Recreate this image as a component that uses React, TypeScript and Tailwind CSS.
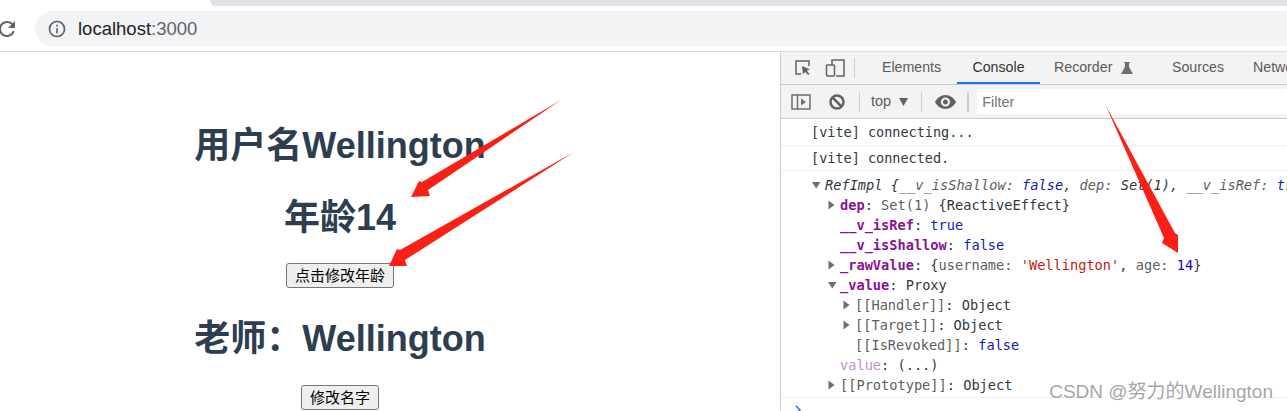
const ROW = "h-5 leading-5 whitespace-pre";

function Caret({ open }: { open?: boolean }) {
  return (
    <svg width="9" height="10" viewBox="0 0 9 10" className="shrink-0 fill-[#6e6e6e]">
      {open ? <path d="M0 2h8.500L4.250 8.500z" /> : <path d="M0.500 0.500v9l6-4.500z" />}
    </svg>
  );
}

function TreeRow({
  indent,
  caret,
  open,
  children,
}: {
  indent: string;
  caret?: boolean;
  open?: boolean;
  children: React.ReactNode;
}) {
  return (
    <div className={`flex items-center ${ROW} ${indent}`}>
      <span className="w-[12px] shrink-0">{caret && <Caret open={open} />}</span>
      <span>{children}</span>
    </div>
  );
}

function Arrows() {
  return (
    <svg width="1287" height="411" viewBox="0 0 1287 411" className="pointer-events-none absolute left-0 top-0 fill-[#fa2015]">
      <path d="M561 100 422 182 419 181 411 197 430 196 428 190z" />
      <path d="M574 152 400 250 397 249 389 266 407 266 405 260z" />
      <path d="M1106 106 1164 238 1162 243 1178 253 1178 235 1175 233z" />
    </svg>
  );
}

function Toolbar() {
  return (
    <div className="flex h-[52px] flex-col bg-white">
      <div className="h-[11px] shrink-0">
        <div className="ml-[210px] h-[6px] rounded-bl-[6px] bg-[#dee1e6]" />
      </div>
      <div className="flex h-[35px] shrink-0 items-center">
        <svg width="24" height="24" viewBox="0 0 24 24" className="-ml-[5px] shrink-0 fill-[#5f6368]">
          <path d="M17.65 6.35A7.96 7.96 0 0 0 12 4a8 8 0 1 0 7.73 10h-2.08A6 6 0 1 1 12 6c1.66 0 3.14.69 4.22 1.78L13 11h7V4z" />
        </svg>
        <div className="ml-[16px] flex h-[35px] flex-1 items-center rounded-l-full bg-[#f1f3f4] pl-[12px]">
          <svg width="20" height="20" viewBox="0 0 24 24" className="shrink-0 fill-[#5f6368]">
            <path d="M11 7h2v2h-2zm0 4h2v6h-2zm1-9a10 10 0 1 0 0 20 10 10 0 0 0 0-20zm0 18a8 8 0 1 1 0-16 8 8 0 0 1 0 16z" />
          </svg>
          <span className="ml-[11px] text-[18.5px] text-[#202124]">
            localhost<span className="text-[#5f6368]">:3000</span>
          </span>
        </div>
      </div>
      <div className="flex-1 border-b border-[#dadce0]" />
    </div>
  );
}

function Page() {
  return (
    <div className="flex h-[359px] w-[780px] shrink-0 flex-col items-center overflow-hidden bg-white pr-[100px] pt-[73px] text-[#2c3e50]">
      <h1 className="mb-[31px] text-[36px] font-bold leading-[41px]">用户名Wellington</h1>
      <h1 className="mb-[25px] text-[36px] font-bold leading-[41px]">年龄14</h1>
      <button className="mb-[30px] h-[25px] rounded-[3px] border border-[#767676] bg-[#efefef] px-[8px] text-[15px] leading-none text-black">
        点击修改年龄
      </button>
      <h1 className="mb-[26px] text-[36px] font-bold leading-[41px]">老师：Wellington</h1>
      <button className="h-[25px] shrink-0 rounded-[3px] border border-[#767676] bg-[#efefef] px-[8px] text-[15px] leading-none text-black">
        修改名字
      </button>
    </div>
  );
}

function DevTools() {
  return (
    <div className="flex h-[359px] min-w-0 flex-1 flex-col overflow-hidden border-l border-[#ccc] bg-white">
      {/* tabs */}
      <div className="flex h-[33px] shrink-0 items-center overflow-hidden whitespace-nowrap border-b border-[#ccc] bg-[#f3f3f3] text-[14.2px] text-[#5a5a5a]">
        <svg width="20" height="20" viewBox="0 0 20 20" className="ml-[12px] shrink-0 fill-none stroke-[#5f6368] stroke-[1.5]">
          <path d="M8 16H3V3h13v5" />
          <path d="M9 8l8 3.5-3.2 1.3 2.7 3-1.4 1.2-2.6-3L10 16z" className="fill-[#5f6368] stroke-none" />
        </svg>
        <svg width="20" height="20" viewBox="0 0 20 20" className="ml-[12px] shrink-0 fill-none stroke-[#5f6368] stroke-[1.5]">
          <path d="M7 7V2h12v16H11" />
          <rect x="1.500" y="7" width="8" height="11" rx="1" />
        </svg>
        <div className="ml-[9px] h-[20px] w-px shrink-0 bg-[#ccc]" />
        <span className="ml-[27px] w-[60px] shrink-0">Elements</span>
        <div className="relative ml-[15px] flex h-full w-[83px] shrink-0 items-center justify-center text-[#333]">
          Console
          <div className="absolute inset-x-0 bottom-[-1px] h-[3px] bg-[#1a73e8]" />
        </div>
        <span className="ml-[14px] w-[59px] shrink-0">Recorder</span>
        <svg width="14" height="14" viewBox="0 0 14 14" className="ml-[7px] shrink-0 fill-[#6e6e6e]">
          <path d="M4 1h6v1H9v4l4 7H1l4-7V2H4z" />
        </svg>
        <span className="ml-[38px] w-[52px] shrink-0">Sources</span>
        <span className="ml-[29px] shrink-0">Network</span>
      </div>
      {/* console toolbar */}
      <div className="flex h-[34px] shrink-0 items-center border-b border-[#ccc] bg-[#f3f3f3] text-[14.5px] text-[#5a5a5a]">
        <svg width="20" height="18" viewBox="0 0 20 18" className="ml-[10px] shrink-0 fill-none stroke-[#6e6e6e] stroke-[1.500]">
          <rect x="1" y="2" width="18" height="14" />
          <path d="M6.500 2v14" />
          <path d="M10 5.500v7l5-3.500z" className="fill-[#6e6e6e] stroke-none" />
        </svg>
        <svg width="18" height="18" viewBox="0 0 18 18" className="ml-[17px] shrink-0 fill-none stroke-[#5f6368] stroke-[2.500]">
          <circle cx="9" cy="9" r="6.500" />
          <path d="M4.500 4.500l9 9" />
        </svg>
        <div className="ml-[13px] h-[20px] w-px bg-[#ccc]" />
        <span className="ml-[11px]">top</span>
        <svg width="9" height="8" viewBox="0 0 9 8" className="ml-[8px] shrink-0 fill-[#5f6368]">
          <path d="M0 0h9L4.500 8z" />
        </svg>
        <div className="ml-[13px] h-[20px] w-px bg-[#ccc]" />
        <svg width="21" height="14" viewBox="0 0 21 14" className="ml-[13px] shrink-0 fill-[#5f6368]">
          <path d="M10.500 0C6 0 2 3 0 7c2 4 6 7 10.500 7S19 11 21 7c-2-4-6-7-10.500-7zm0 11.500a4.500 4.500 0 1 1 0-9 4.500 4.500 0 0 1 0 9zm0-7a2.500 2.500 0 1 0 0 5 2.500 2.500 0 0 0 0-5z" />
        </svg>
        <div className="ml-[11px] h-[20px] w-[2px] bg-[#ccc]" />
        <div className="ml-[8px] flex h-[25px] flex-1 items-center bg-white pl-[5px] pt-[2px] text-[#757575]">Filter</div>
      </div>
      {/* messages */}
      <div className="relative flex-1 overflow-hidden font-['DejaVu_Sans_Mono',monospace] text-[13.5px] text-[#303942]">
        <div className="flex h-[27px] items-center border-b border-[#f0f0f0] pl-[30px] pt-[1px] whitespace-pre">[vite] connecting...</div>
        <div className="flex h-[25px] items-center border-b border-[#f0f0f0] pl-[30px] pt-[1px] whitespace-pre">[vite] connected.</div>
        <div className="border-b border-[#f0f0f0] pb-[2px] pt-[4px] text-[13.65px]">
          <TreeRow indent="pl-[31px]" caret open>
            <i className="ml-[1px]">RefImpl {"{"}<span className="text-[#5e5e5e]">__v_isShallow: </span><span className="text-[#0d22aa]">false</span>, <span className="text-[#5e5e5e]">dep: </span>Set(1), <span className="text-[#5e5e5e]">__v_isRef: </span><span className="text-[#0d22aa]">true</span></i>
          </TreeRow>
          <TreeRow indent="pl-[47px]" caret>
            <span className="font-bold text-[#881391]">dep</span>: <span className="text-[#5e5e5e]">Set(1) </span>{"{ReactiveEffect}"}
          </TreeRow>
          <TreeRow indent="pl-[47px]">
            <span className="font-bold text-[#881391]">__v_isRef</span>: <span className="text-[#0d22aa]">true</span>
          </TreeRow>
          <TreeRow indent="pl-[47px]">
            <span className="font-bold text-[#881391]">__v_isShallow</span>: <span className="text-[#0d22aa]">false</span>
          </TreeRow>
          <TreeRow indent="pl-[47px]" caret>
            <span className="font-bold text-[#881391]">_rawValue</span>: {"{"}<span className="text-[#5e5e5e]">username: </span><span className="text-[#c41a16]">'Wellington'</span>, <span className="text-[#5e5e5e]">age: </span><span className="text-[#1c00cf]">14</span>{"}"}
          </TreeRow>
          <TreeRow indent="pl-[47px]" caret open>
            <span className="font-bold text-[#881391]">_value</span>: Proxy
          </TreeRow>
          <TreeRow indent="pl-[62px]" caret>
            <span className="text-[#5e5e5e]">[[Handler]]</span>: Object
          </TreeRow>
          <TreeRow indent="pl-[62px]" caret>
            <span className="text-[#5e5e5e]">[[Target]]</span>: Object
          </TreeRow>
          <TreeRow indent="pl-[62px]">
            <span className="text-[#5e5e5e]">[[IsRevoked]]</span>: <span className="text-[#0d22aa]">false</span>
          </TreeRow>
          <TreeRow indent="pl-[47px]">
            <span className="text-[#c58fc8]">value</span>: (...)
          </TreeRow>
          <TreeRow indent="pl-[47px]" caret>
            <span className="text-[#5e5e5e]">[[Prototype]]</span>: Object
          </TreeRow>
        </div>
        <svg width="10" height="10" viewBox="0 0 10 10" className="ml-[12px] mt-[7px] fill-none stroke-[#1a73e8] stroke-[1.500]">
          <path d="M3 1l4 4-4 4" />
        </svg>
      </div>
    </div>
  );
}

export default function App() {
  return (
    <div className="relative h-[411px] w-[1287px] overflow-hidden bg-white font-['Liberation_Sans','Noto_Sans_CJK_SC',sans-serif]">
      <Toolbar />
      <div className="flex">
        <Page />
        <DevTools />
      </div>
      <Arrows />
      {/* watermark */}
      <span className="absolute right-[14px] top-[380px] text-[19px] leading-[24px] text-[#9a9a9a]/90">CSDN @努力的Wellington</span>
    </div>
  );
}
